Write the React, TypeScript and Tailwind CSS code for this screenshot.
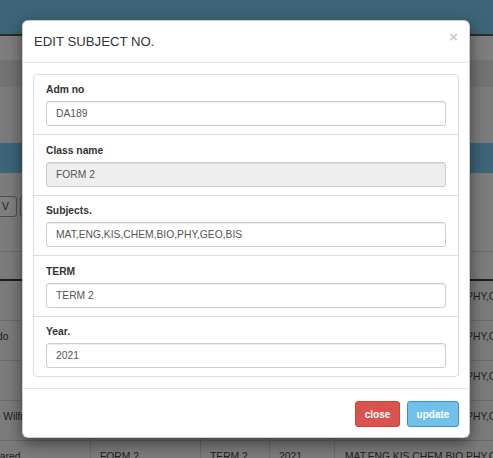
import React from 'react';

const fields = [
  { label: 'Adm no', value: 'DA189', pad: 'pt-[7px]', disabled: false },
  { label: 'Class name', value: 'FORM 2', pad: 'pt-[8px]', disabled: true },
  { label: 'Subjects.', value: 'MAT,ENG,KIS,CHEM,BIO,PHY,GEO,BIS', pad: 'pt-[7px]', disabled: false },
  { label: 'TERM', value: 'TERM 2', pad: 'pt-[8px]', disabled: false },
  { label: 'Year.', value: '2021', pad: 'pt-[7px]', disabled: false },
];

const rows = ['Ali', 'Amondo', 'Abdi', 'Otieno Wilfred', 'Otim Jared'];

const BackgroundPage: React.FC = () => (
  <div className="flex flex-col">
    <div className="h-[34px] bg-[#3d6478]"></div>
    <div className="h-[2px] bg-[#2b2b2b]"></div>
    <div className="h-[24px] bg-[#7e7e7e]"></div>
    <div className="h-[27px] bg-[#737373]"></div>
    <div className="h-[56px] bg-[#7b7b7b]"></div>
    <div className="h-[30px] bg-[#3d6478]"></div>
    <div className="h-[78px] pt-[23px] bg-[#7c7c7c]">
      <div className="flex gap-[3px] ml-[-23px]">
        <div className="w-[40px] h-[21px] flex items-center justify-end pr-[4px] border border-[#4d4d4d] rounded-[3px] bg-[#7f7f7f] text-[10.3px] tracking-[3px] text-[#1e1e1e]">CSV</div>
        <div className="w-[40px] h-[21px] flex items-center justify-center border border-[#4d4d4d] rounded-[3px] bg-[#7f7f7f] text-[10.3px] text-[#1e1e1e]">Excel</div>
      </div>
    </div>
    <div className="h-[1px] bg-[#6b6b6b]"></div>
    <div className="h-[27px] bg-[#7c7c7c]"></div>
    <div className="h-[2px] bg-[#1c1c1c]"></div>
    <div className="ml-[-40px] w-[700px]">
      {rows.map(name => (
        <div key={name} className="grid grid-cols-[130px_110px_69px_65px_1fr] h-[40px] border-b border-[#6b6b6b] bg-[#7b7b7b] text-[10.3px] leading-[15px] text-[#1e1e1e] whitespace-nowrap">
          <div className="pl-[9px] pt-[8px] border-l border-[#6b6b6b]">{name}</div>
          <div className="pl-[9px] pt-[8px] border-l border-[#6b6b6b]">FORM 2</div>
          <div className="pl-[9px] pt-[8px] border-l border-[#6b6b6b]">TERM 2</div>
          <div className="pl-[9px] pt-[8px] border-l border-[#6b6b6b]">2021</div>
          <div className="pl-[10px] pt-[8px] border-l border-[#6b6b6b]">MAT,ENG,KIS,CHEM,BIO,PHY,CRE,BIS</div>
        </div>
      ))}
    </div>
  </div>
);

export default function App() {
  return (
    <div className="relative w-[493px] h-[458px] overflow-hidden bg-[#7b7b7b] font-['Liberation_Sans',Arial,sans-serif]">
      <BackgroundPage />

      <div className="absolute left-[22px] top-[20px] w-[448px] bg-white border border-black/20 rounded-[6px] shadow-[0_5px_15px_rgba(0,0,0,0.5)]">
        <div className="flex items-start justify-between px-[11px] pt-[11px] pb-[11px] border-b border-[#e5e5e5]">
          <h4 className="text-[13.2px] leading-[19px] text-[#333]">EDIT SUBJECT NO.</h4>
          <span className="mt-[-3px] text-[15.4px] leading-none font-bold text-black opacity-20">×</span>
        </div>

        <div className="px-[10px] pt-[11px] pb-[11px]">
          <div className="border border-[#ddd] rounded-[4px] divide-y divide-[#ddd]">
            {fields.map(f => (
              <div key={f.label} className={`px-[12px] pb-[8px] ${f.pad}`}>
                <label className="block mb-[4px] text-[10.3px] leading-[15px] font-bold text-[#333]">{f.label}</label>
                <input
                  readOnly
                  disabled={f.disabled}
                  value={f.value}
                  className={`block w-full h-[25px] px-[9px] border border-[#ccc] rounded-[3px] text-[10.3px] text-[#555] shadow-[inset_0_1px_1px_rgba(0,0,0,0.075)] outline-none ${f.disabled ? 'bg-[#eee]' : 'bg-white'}`}
                />
              </div>
            ))}
          </div>
        </div>

        <div className="flex justify-end gap-[7px] px-[10px] pt-[12px] pb-[10px] border-t border-[#e5e5e5]">
          <button className="w-[45px] h-[26px] rounded-[3px] border border-[#d43f3a] bg-[#d9534f] text-[10px] font-bold text-white">close</button>
          <button className="w-[52px] h-[26px] rounded-[3px] border border-[#3f8dd3] bg-[#70c0ea] text-[10px] font-bold text-white">update</button>
        </div>
      </div>
    </div>
  );
}
